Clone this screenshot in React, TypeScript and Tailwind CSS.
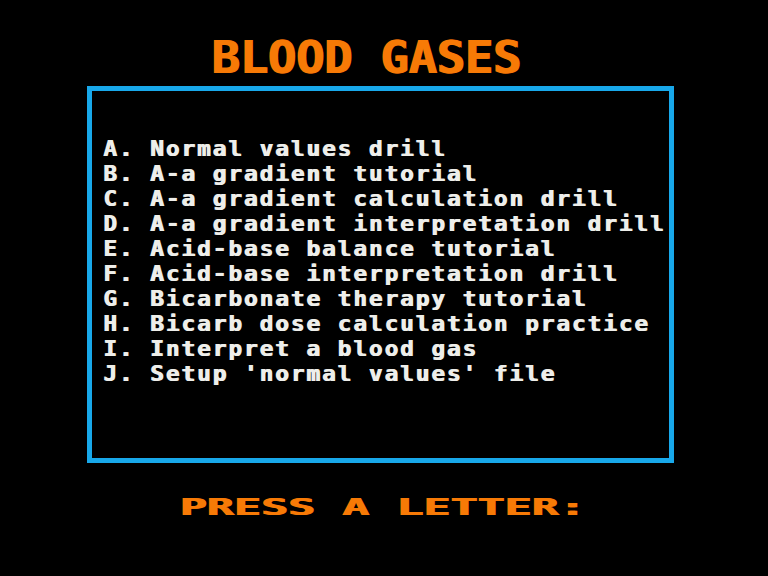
import React from "react";

const items = [
  "A. Normal values drill",
  "B. A-a gradient tutorial",
  "C. A-a gradient calculation drill",
  "D. A-a gradient interpretation drill",
  "E. Acid-base balance tutorial",
  "F. Acid-base interpretation drill",
  "G. Bicarbonate therapy tutorial",
  "H. Bicarb dose calculation practice",
  "I. Interpret a blood gas",
  "J. Setup 'normal values' file",
];

export default function App() {
  return (
    <div className="w-[768px] h-[576px] bg-black flex flex-col overflow-hidden font-['DejaVu_Sans_Mono',monospace] font-bold">
      <div className="ml-[211px] mt-[35px] h-[45px] text-[45px] leading-[45px] text-[#f77a06] whitespace-pre">
        <span className="inline-block origin-left scale-x-[1.05] tracking-[-0.3px] [text-shadow:1.5px_0_0_#f77a06]">
          BLOOD GASES
        </span>
      </div>
      <div className="ml-[87px] mt-[6px] w-[587px] h-[377px] border-[5px] border-[#18a8ea] pt-[46px] pl-[11px] flex flex-col">
        {items.map((t) => (
          <div
            key={t}
            className="h-[25px] text-[20.6px] leading-[25px] text-[#eeeeea] whitespace-pre"
          >
            <span className="inline-block origin-left scale-x-[1.1] tracking-[1.8px] [text-shadow:1px_0_0_#eeeeea]">
              {t}
            </span>
          </div>
        ))}
      </div>
      <div className="ml-[179px] mt-[32px] h-[24px] text-[23.3px] leading-[23.3px] text-[#f77a06] whitespace-pre">
        <span className="inline-block origin-left scale-x-[1.93] [text-shadow:1px_0_0_#f77a06]">PRESS A LETTER:</span>
      </div>
    </div>
  );
}
